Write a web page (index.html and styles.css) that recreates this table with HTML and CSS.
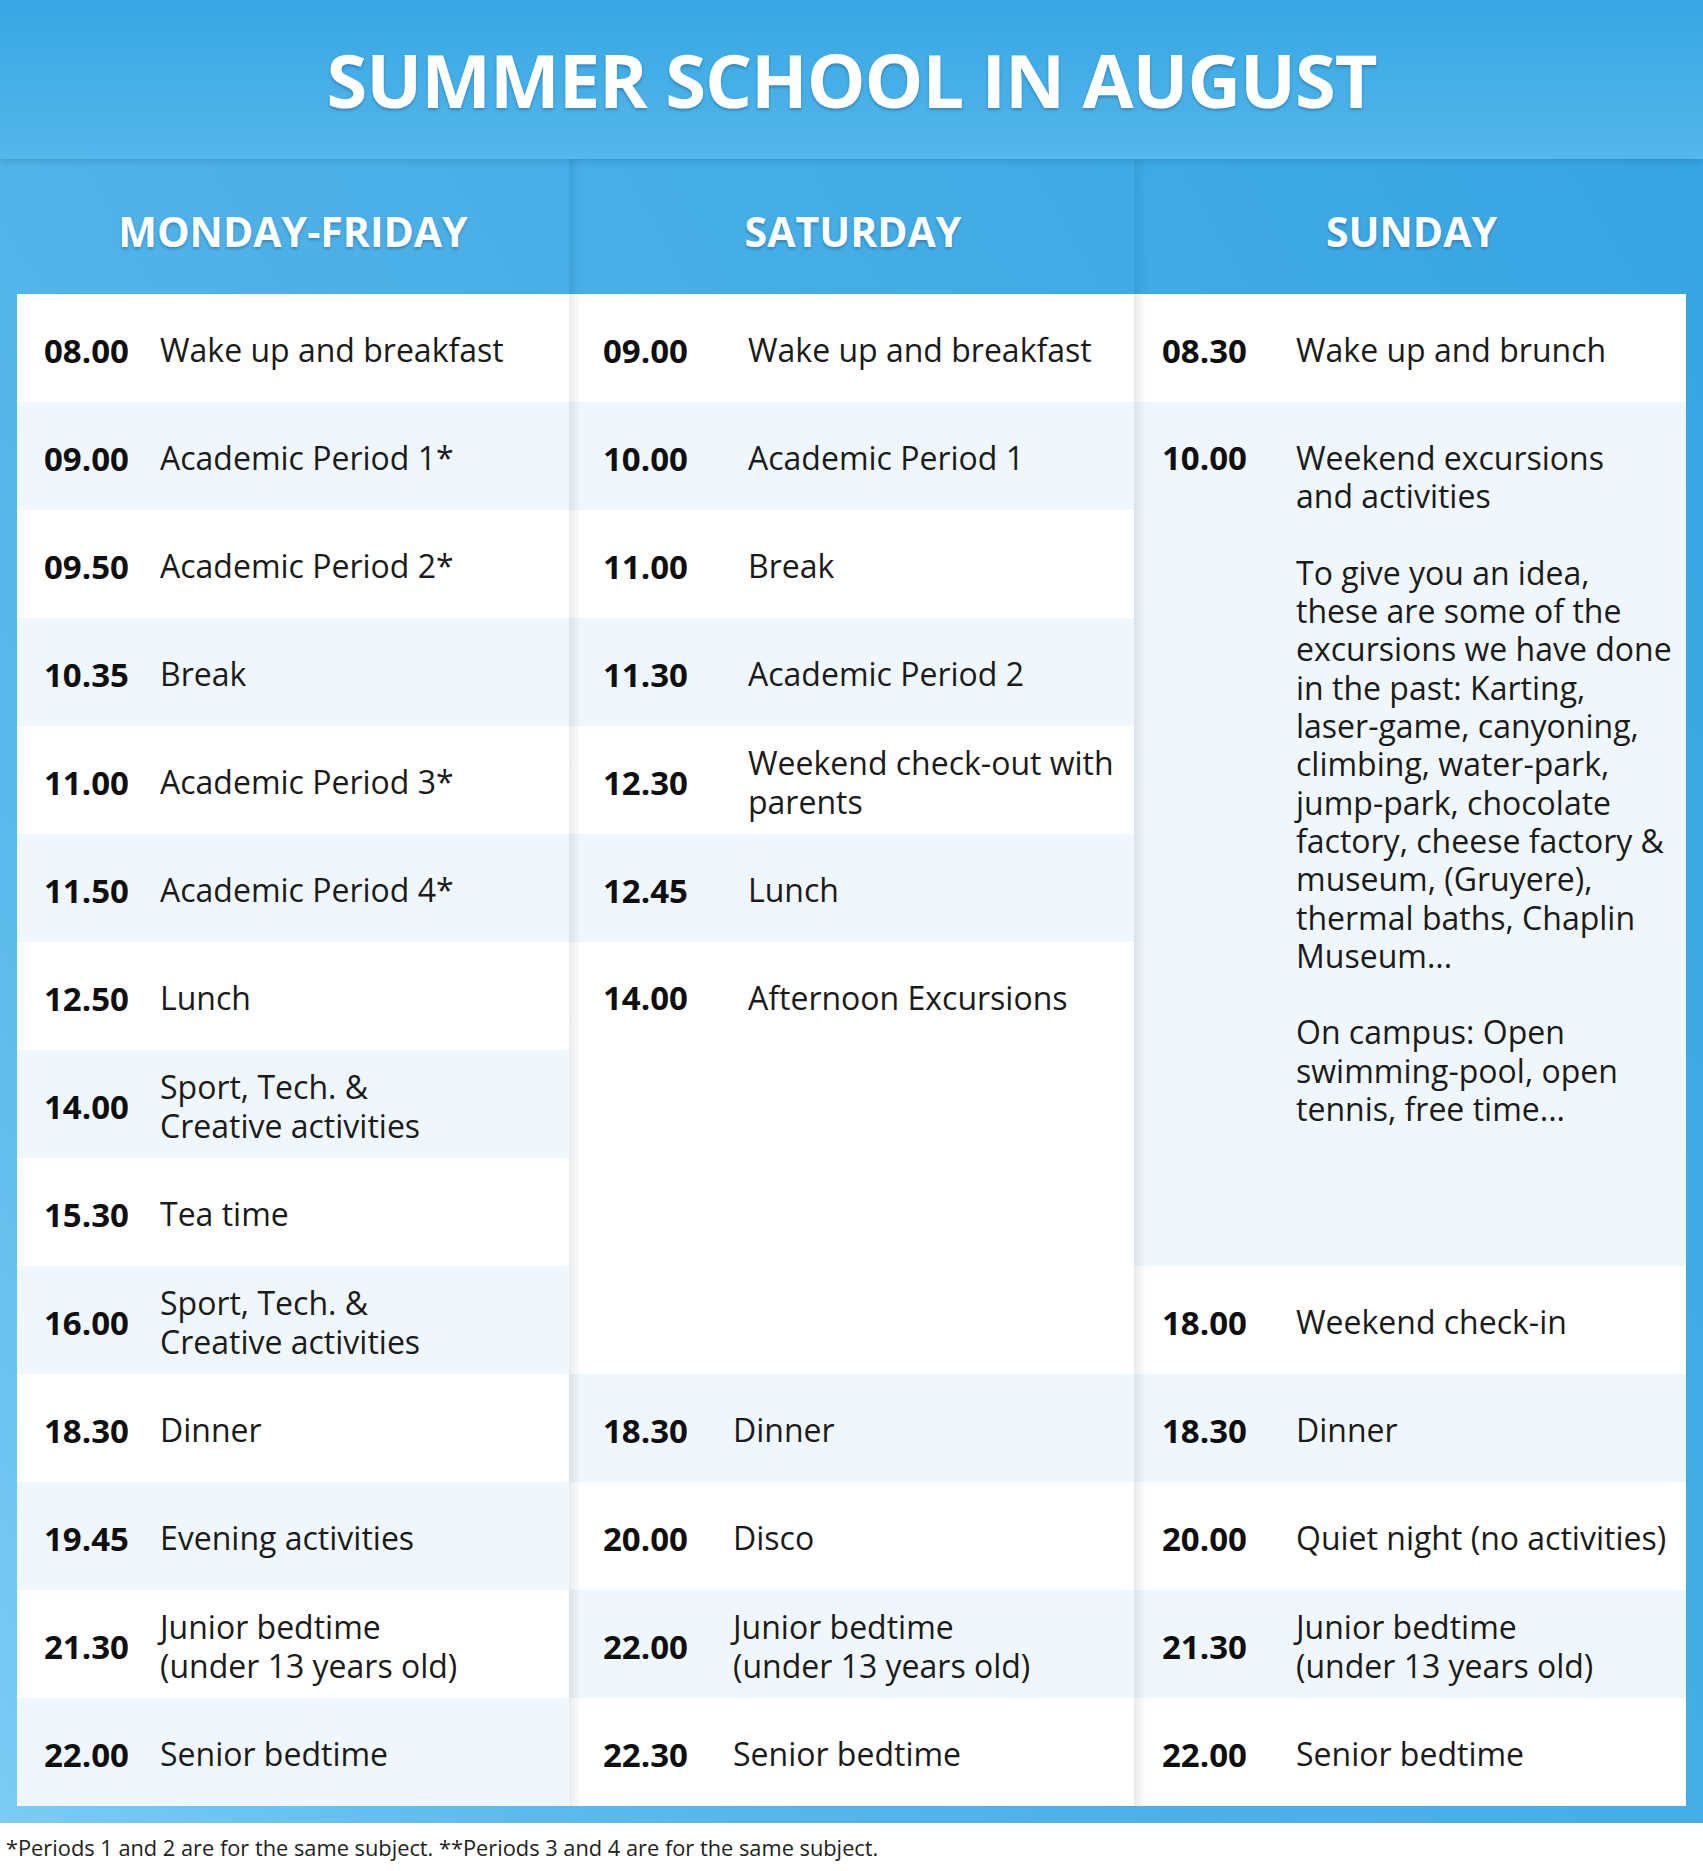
FILE: index.html
```html
<!DOCTYPE html>
<html lang="en">
<head>
<meta charset="utf-8">
<title>Summer School in August</title>
<link rel="stylesheet" href="styles.css">
</head>
<body>
<header class="title-band"><h1 class="title">SUMMER SCHOOL IN AUGUST</h1></header>
<section class="board">
  <div class="day-heads">
    <div class="day-head">MONDAY-FRIDAY</div>
    <div class="day-head">SATURDAY</div>
    <div class="day-head">SUNDAY</div>
  </div>
  <div class="columns">
    <div class="col col-week">
      <div class="row"><span class="time">08.00</span><span class="desc">Wake up and breakfast</span></div>
      <div class="row tint"><span class="time">09.00</span><span class="desc">Academic Period 1*</span></div>
      <div class="row"><span class="time">09.50</span><span class="desc">Academic Period 2*</span></div>
      <div class="row tint"><span class="time">10.35</span><span class="desc">Break</span></div>
      <div class="row"><span class="time">11.00</span><span class="desc">Academic Period 3*</span></div>
      <div class="row tint"><span class="time">11.50</span><span class="desc">Academic Period 4*</span></div>
      <div class="row"><span class="time">12.50</span><span class="desc">Lunch</span></div>
      <div class="row tint"><span class="time">14.00</span><span class="desc">Sport, Tech. &amp;<br>Creative activities</span></div>
      <div class="row"><span class="time">15.30</span><span class="desc">Tea time</span></div>
      <div class="row tint"><span class="time">16.00</span><span class="desc">Sport, Tech. &amp;<br>Creative activities</span></div>
      <div class="row"><span class="time">18.30</span><span class="desc">Dinner</span></div>
      <div class="row tint"><span class="time">19.45</span><span class="desc">Evening activities</span></div>
      <div class="row"><span class="time">21.30</span><span class="desc">Junior bedtime<br>(under 13 years old)</span></div>
      <div class="row tint"><span class="time">22.00</span><span class="desc">Senior bedtime</span></div>
    </div>
    <div class="col col-sat">
      <div class="row"><span class="time">09.00</span><span class="desc">Wake up and breakfast</span></div>
      <div class="row tint"><span class="time">10.00</span><span class="desc">Academic Period 1</span></div>
      <div class="row"><span class="time">11.00</span><span class="desc">Break</span></div>
      <div class="row tint"><span class="time">11.30</span><span class="desc">Academic Period 2</span></div>
      <div class="row"><span class="time">12.30</span><span class="desc">Weekend check-out with<br>parents</span></div>
      <div class="row tint"><span class="time">12.45</span><span class="desc">Lunch</span></div>
      <div class="row span4"><span class="time">14.00</span><span class="desc">Afternoon Excursions</span></div>
      <div class="row tint late"><span class="time">18.30</span><span class="desc">Dinner</span></div>
      <div class="row late"><span class="time">20.00</span><span class="desc">Disco</span></div>
      <div class="row tint late"><span class="time">22.00</span><span class="desc">Junior bedtime<br>(under 13 years old)</span></div>
      <div class="row late"><span class="time">22.30</span><span class="desc">Senior bedtime</span></div>
    </div>
    <div class="col col-sun">
      <div class="row"><span class="time">08.30</span><span class="desc">Wake up and brunch</span></div>
      <div class="row tint span8"><span class="time">10.00</span><span class="desc">Weekend excursions<br>and activities<br><br>To give you an idea,<br>these are some of the<br>excursions we have done<br>in the past: Karting,<br>laser-game, canyoning,<br>climbing, water-park,<br>jump-park, chocolate<br>factory, cheese factory &amp;<br>museum, (Gruyere),<br>thermal baths, Chaplin<br>Museum...<br><br>On campus: Open<br>swimming-pool, open<br>tennis, free time...</span></div>
      <div class="row"><span class="time">18.00</span><span class="desc">Weekend check-in</span></div>
      <div class="row tint"><span class="time">18.30</span><span class="desc">Dinner</span></div>
      <div class="row"><span class="time">20.00</span><span class="desc">Quiet night (no activities)</span></div>
      <div class="row tint"><span class="time">21.30</span><span class="desc">Junior bedtime<br>(under 13 years old)</span></div>
      <div class="row"><span class="time">22.00</span><span class="desc">Senior bedtime</span></div>
    </div>
  </div>
</section>
<p class="note">*Periods 1 and 2 are for the same subject. **Periods 3 and 4 are for the same subject.</p>
</body>
</html>
```
FILE: styles.css
```css
* { box-sizing: border-box; }
html, body { margin: 0; padding: 0; }
body {
  width: 1703px;
  background: #ffffff;
  font-family: "Open Sans", "DejaVu Sans", sans-serif;
  color: #1b1b1b;
}
.title-band {
  position: relative;
  z-index: 2;
  height: 159px;
  display: flex;
  align-items: center;
  justify-content: center;
  background: linear-gradient(to bottom, #37a7e4 0%, #46afe7 55%, #55b7eb 100%);
  box-shadow: 0 3px 6px rgba(10, 70, 120, 0.18);
}
.title {
  margin: 0;
  font-size: 74px;
  font-weight: 700;
  color: #ffffff;
  letter-spacing: -1px;
  line-height: 1;
  text-shadow: 0 2px 3px rgba(0, 40, 80, 0.3);
}
.board {
  position: relative;
  padding: 0 17px 17px;
  background: linear-gradient(60deg, #7bccf5 0%, #5cbaec 20%, #4fb2e8 40%, #44ade6 65%, #36a5e3 100%);
}
.day-heads {
  display: grid;
  grid-template-columns: 552px 565px 552px;
  height: 135px;
}
.day-head {
  position: relative;
  display: flex;
  align-items: center;
  justify-content: center;
  padding-top: 8px;
  font-size: 41px;
  font-weight: 700;
  color: #ffffff;
  text-shadow: 0 2px 3px rgba(0, 40, 80, 0.3);
}
.day-head + .day-head {
  border-left: 3px solid rgba(20, 110, 170, 0.18);
  box-shadow: inset 10px 0 10px -8px rgba(20, 90, 150, 0.15);
}
.columns {
  display: grid;
  grid-template-columns: 552px 565px 552px;
}
.col {
  position: relative;
  display: flex;
  flex-direction: column;
  background: #ffffff;
}
.col-sat::after, .col-sun::after {
  content: "";
  position: absolute;
  top: 0;
  bottom: 0;
  left: 0;
  width: 12px;
  pointer-events: none;
  background: linear-gradient(to right, rgba(0, 20, 40, 0.09), rgba(0, 20, 40, 0));
}
.row {
  display: flex;
  align-items: center;
  height: 108px;
  padding-top: 5px;
  flex: none;
  background: #ffffff;
}
.row.tint { background: #eff7fc; }
.row.span4 { height: 432px; align-items: flex-start; padding-top: 37px; }
.row.span8 { height: 864px; align-items: flex-start; padding-top: 37px; }
.time {
  flex: none;
  font-size: 33px;
  font-weight: 700;
  color: #0f0f0f;
  line-height: 38px;
}
.desc {
  font-size: 32px;
  font-weight: 400;
  line-height: 38.3px;
  color: #1b1b1b;
  white-space: nowrap;
}
.col-week .time { width: 116px; margin-left: 27px; }
.col-sat .time { width: 145px; margin-left: 34px; }
.col-sat .late .time { width: 130px; }
.col-sun .time { width: 134px; margin-left: 28px; }
.note {
  margin: 0;
  padding: 10px 0 0 6px;
  font-size: 21.8px;
  line-height: 30px;
  color: #222222;
}
```
